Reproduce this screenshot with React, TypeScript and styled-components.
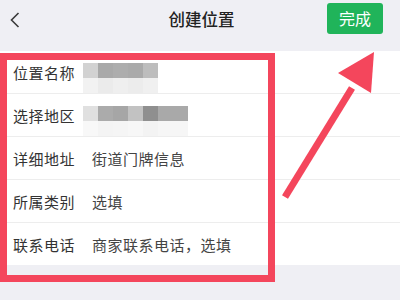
import React from 'react';
import styled, {createGlobalStyle} from 'styled-components';

const GlobalStyle = createGlobalStyle`
  html, body {
    margin: 0;
    padding: 0;
    background: #efeff4;
  }
  body {
    font-family: "Noto Sans CJK SC", "Noto Sans", sans-serif;
  }
`;

type Cell = string;

const rows: {label: string; value?: string; mosaic?: Cell[][]}[] = [
    {
        label: '位置名称',
        mosaic: [
            ['#d2d2d2', '#a9a9a9', '#adadad', '#aaaaaa', '#bdbdbd'],
            ['#f2f2f2', '#ebebeb', '#efefef', '#ececec', '#f0f0f0'],
        ],
    },
    {
        label: '选择地区',
        mosaic: [
            ['#e0e0e0', '#ababab', '#a6a6a6', '#c2c2c2', '#8f8f8f', '#a9a9a9', '#a9a9a9'],
            ['#f8f8f8', '#f4f4f4', '#f5f5f5', '#f7f7f7', '#f3f3f3', '#f6f6f6', '#f6f6f6'],
        ],
    },
    {label: '详细地址', value: '街道门牌信息'},
    {label: '所属类别', value: '选填'},
    {label: '联系电话', value: '商家联系电话，选填'},
];

const App = () => {
    return (
        <Page>
            <GlobalStyle/>
            <Header>
                <Back>
                    <svg width="10" height="16" viewBox="0 0 10 16">
                        <path d="M8.5 1 L1.5 8 L8.5 15" fill="none" stroke="#3a3a3a" strokeWidth="1.6"/>
                    </svg>
                </Back>
                <Title>创建位置</Title>
                <DoneButton>完成</DoneButton>
            </Header>
            <List>
                {rows.map(r => (
                    <Row key={r.label}>
                        <Label>{r.label}</Label>
                        {r.value && <Value>{r.value}</Value>}
                        {r.mosaic && (
                            <Mosaic>
                                {r.mosaic.map((line, i) => (
                                    <MosaicLine key={i}>
                                        {line.map((c, j) => <MosaicCell key={j} $c={c}/>)}
                                    </MosaicLine>
                                ))}
                            </Mosaic>
                        )}
                    </Row>
                ))}
            </List>
            <HighlightBox/>
            <Arrow width="400" height="300" viewBox="0 0 400 300">
                <line x1="285" y1="197" x2="352" y2="88" stroke="#f4465c" strokeWidth="7" strokeLinecap="butt"/>
                <polygon points="374,52 338,73 371,93" fill="#f4465c"/>
            </Arrow>
        </Page>
    );
};

export default App;

const Page = styled.div`
  position: relative;
  width: 400px;
  height: 300px;
  overflow: hidden;
  background: #efeff4;
`;

const Header = styled.div`
  height: 52px;
  display: flex;
  align-items: center;
  justify-content: space-between;
  padding: 0 17px 0 10px;
  box-sizing: border-box;
`;

const Back = styled.div`
  width: 56px;
  display: flex;
  align-items: center;
  margin-top: -12px;
`;

const Title = styled.div`
  font-size: 16.5px;
  font-weight: 500;
  color: #222;
  margin-top: -15px;
  margin-left: 10px;
`;

const DoneButton = styled.div`
  width: 56px;
  height: 31px;
  margin-top: -16px;
  border-radius: 3px;
  background: #20b45a;
  color: #fff;
  font-size: 16px;
  display: flex;
  align-items: center;
  justify-content: center;
`;

const List = styled.div`
  background: #fff;
  margin-top: -1px;
`;

const Row = styled.div`
  height: 43px;
  display: flex;
  align-items: center;
  padding-left: 13px;
  border-bottom: 1px solid #ededed;
  box-sizing: border-box;

  &:last-child {
    border-bottom: none;
    height: 42px;
  }
`;

const Label = styled.span`
  width: 79px;
  font-size: 15px;
  letter-spacing: 0.5px;
  color: #333;
`;

const Value = styled.span`
  font-size: 15px;
  letter-spacing: 0.5px;
  color: #444;
`;

const Mosaic = styled.div`
  align-self: flex-start;
  margin-top: 12px;
  margin-left: -9px;
  display: flex;
  flex-direction: column;
`;

const MosaicLine = styled.div`
  display: flex;
`;

const MosaicCell = styled.div<{$c: string}>`
  width: 15px;
  height: 15px;
  background: ${p => p.$c};
`;

const HighlightBox = styled.div`
  position: absolute;
  left: 0;
  top: 53px;
  width: 275px;
  height: 229px;
  box-sizing: border-box;
  border: 7px solid #f4465c;
  pointer-events: none;
`;

const Arrow = styled.svg`
  position: absolute;
  left: 0;
  top: 0;
  pointer-events: none;
`;
